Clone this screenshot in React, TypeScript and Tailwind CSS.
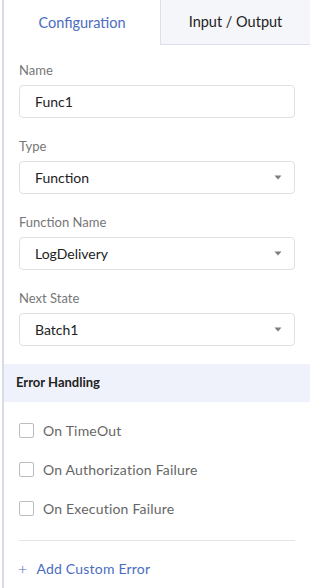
import React from 'react';

const Caret = () => (
  <svg width="8" height="5" viewBox="0 0 8 5" className="shrink-0">
    <path d="M0.5 0.5h7L4 4.5z" fill="#7a7c82" />
  </svg>
);

const Field: React.FC<{ label: string; value: string; select?: boolean }> = ({ label, value, select }) => (
  <div className="flex flex-col">
    <div className="text-[13px] text-[#777] leading-4 mb-[7px]">{label}</div>
    <div className="h-[33px] flex items-center justify-between border border-[#dfe0e4] rounded-[4px] pl-[15px] pr-[12px]">
      <span className="text-[14px] text-[#222]">{value}</span>
      {select && <Caret />}
    </div>
  </div>
);

const Check: React.FC<{ label: string }> = ({ label }) => (
  <div className="flex items-center gap-[9px] h-[16px]">
    <div className="w-[15px] h-[15px] border border-[#bbbcc2] rounded-[2px] bg-white" />
    <span className="text-[14px] text-[#666] tracking-[0.2px]">{label}</span>
  </div>
);

export default function App() {
  return (
    <div className="w-[310px] h-[588px] bg-white overflow-hidden flex" style={{ fontFamily: 'Lato, "Open Sans", sans-serif' }}>
      <div className="w-[2px] shrink-0" />
      <div className="w-[2px] shrink-0 bg-[#d9dbe7]" />
      <div className="flex-1 flex flex-col">
        <div className="flex h-[45px]">
          <div className="w-[156px] flex items-center justify-center text-[14.5px] text-[#4a6dbf]">Configuration</div>
          <div className="flex-1 flex items-center justify-center text-[14.5px] text-[#222] bg-[#f5f6f9] border-l border-b border-[#dde0ea]">Input / Output</div>
        </div>
        <div className="flex flex-col gap-[20px] pl-[15px] pr-[15px] pt-[17px]">
          <Field label="Name" value="Func1" />
          <Field label="Type" value="Function" select />
          <Field label="Function Name" value="LogDelivery" select />
          <Field label="Next State" value="Batch1" select />
        </div>
        <div className="mt-[18px] h-[38px] bg-[#f0f2fb] flex items-center pl-[12px] text-[13px] font-bold text-[#222]">Error Handling</div>
        <div className="flex flex-col gap-[23px] pl-[15px] pt-[20px]">
          <Check label="On TimeOut" />
          <Check label="On Authorization Failure" />
          <Check label="On Execution Failure" />
        </div>
        <div className="mx-[15px] mt-[24px] border-t border-[#e3e4e8]" />
        <div className="flex items-center gap-[9px] pl-[14px] mt-[17px] text-[14px] text-[#4a6dbf] tracking-[0.2px]">
          <span className="text-[16px] font-light leading-none">+</span>
          <span>Add Custom Error</span>
        </div>
      </div>
    </div>
  );
}
